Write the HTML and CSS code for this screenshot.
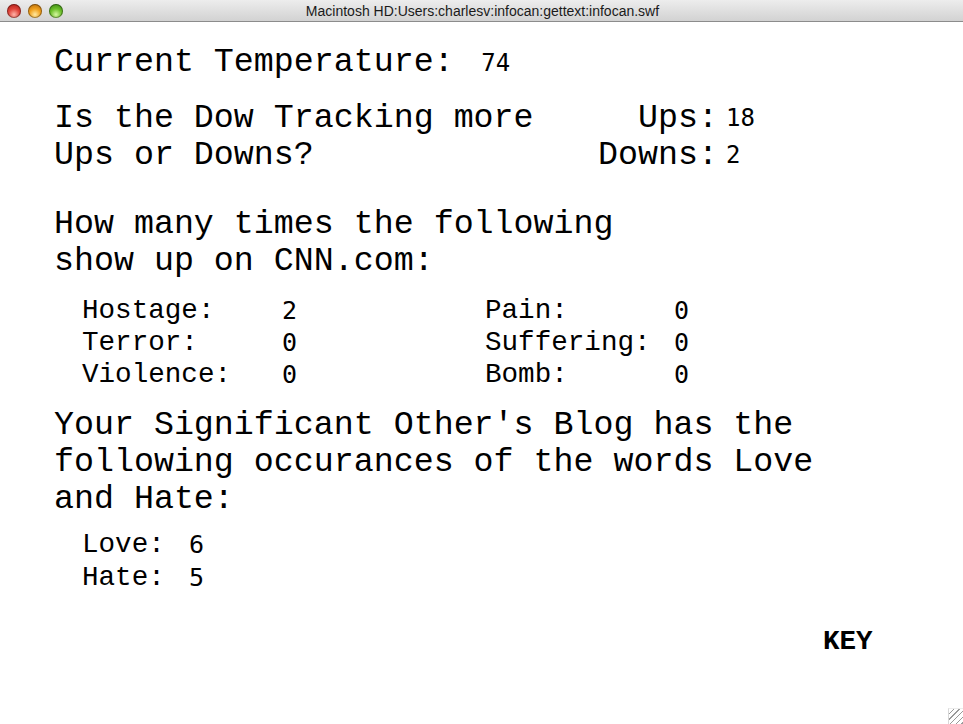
FILE: index.html
```html
<!DOCTYPE html>
<html lang="en">
<head>
    <meta charset="UTF-8">
    <title>infocan.swf</title>
    <link rel="stylesheet" href="styles.css">
</head>
<body>
    <div class="window">
        <div class="titlebar">
            <div class="lights">
                <span class="light light-red"></span>
                <span class="light light-yellow"></span>
                <span class="light light-green"></span>
            </div>
            <div class="title">Macintosh HD:Users:charlesv:infocan:gettext:infocan.swf</div>
        </div>

        <div class="content">
            <div class="temp">
                <span class="heading">Current Temperature:</span>
                <span class="value value-temp">74</span>
            </div>

            <div class="dow">
                <div class="heading dow-question">Is the Dow Tracking more<br>Ups or Downs?</div>
                <div class="dow-counts">
                    <span class="heading dow-label">Ups:</span><span class="value">18</span>
                    <span class="heading dow-label">Downs:</span><span class="value">2</span>
                </div>
            </div>

            <div class="heading cnn-title">How many times the following<br>show up on CNN.com:</div>
            <div class="cnn-counts">
                <span class="label">Hostage:</span><span class="value-sm">2</span>
                <span class="label">Pain:</span><span class="value-sm">0</span>
                <span class="label">Terror:</span><span class="value-sm">0</span>
                <span class="label">Suffering:</span><span class="value-sm">0</span>
                <span class="label">Violence:</span><span class="value-sm">0</span>
                <span class="label">Bomb:</span><span class="value-sm">0</span>
            </div>

            <div class="heading blog-title">Your Significant Other's Blog has the<br>following occurances of the words Love<br>and Hate:</div>
            <div class="blog-counts">
                <span class="label">Love:</span><span class="value-sm">6</span>
                <span class="label">Hate:</span><span class="value-sm">5</span>
            </div>

            <div class="key">KEY</div>
        </div>

        <div class="grip"></div>
    </div>
</body>
</html>
```

FILE: styles.css
```css
body {
    margin: 0;
    background: #fff;
}
.window {
    position: relative;
    width: 963px;
    height: 724px;
    overflow: hidden;
    background: #fff;
}
.titlebar {
    position: relative;
    height: 21px;
    border-bottom: 1px solid #8c8c8c;
    background: linear-gradient(#ededed, #d2d2d2);
    display: flex;
    align-items: center;
    justify-content: center;
}
.lights {
    position: absolute;
    left: 7px;
    top: 4px;
    display: flex;
    gap: 7px;
}
.light {
    width: 14px;
    height: 14px;
    border-radius: 50%;
    box-shadow: inset 0 0 0 1px rgba(0,0,0,0.35);
}
.light-red {
    background: radial-gradient(circle at 50% 75%, #ffb3a8 0, #e0443a 45%, #a3140f 100%);
}
.light-yellow {
    background: radial-gradient(circle at 50% 75%, #ffe9a0 0, #f0a01c 45%, #a85d05 100%);
}
.light-green {
    background: radial-gradient(circle at 50% 75%, #d6f7a0 0, #6cbf2a 45%, #2f7a0c 100%);
}
.title {
    font-family: "Liberation Sans", Arial, sans-serif;
    font-size: 14px;
    color: #1a1a1a;
    margin-left: 2px;
}
.content {
    padding: 22px 0 0 54px;
    font-family: "Courier New", "Nimbus Mono PS", "FreeMono", "Liberation Mono", monospace;
    color: #000;
}
.heading {
    font-size: 33.3px;
    line-height: 37px;
}
.value {
    font-family: "DejaVu Sans Mono", monospace;
    font-size: 24px;
    line-height: 37px;
}
.value-temp {
    margin-left: 18px;
}
.dow {
    display: flex;
    margin-top: 18px;
}
.dow-question {
    width: 520px;
}
.dow-counts {
    display: grid;
    grid-template-columns: 144px auto;
    column-gap: 8px;
}
.dow-label {
    text-align: right;
}
.cnn-title {
    margin-top: 32px;
}
.label {
    font-size: 27.6px;
    line-height: 32px;
}
.value-sm {
    font-family: "DejaVu Sans Mono", monospace;
    font-size: 25px;
    line-height: 32px;
}
.cnn-counts {
    display: grid;
    grid-template-columns: 200px 203px 189px auto;
    margin: 15px 0 0 28px;
}
.blog-title {
    margin-top: 16px;
}
.blog-counts {
    display: grid;
    grid-template-columns: 107px auto;
    margin: 10px 0 0 28px;
}
.blog-counts .label,
.blog-counts .value-sm {
    line-height: 33px;
}
.key {
    margin: 32px 0 0 769px;
    font-size: 27.6px;
    font-weight: bold;
    line-height: 32px;
}
.grip {
    position: absolute;
    right: 0;
    bottom: 0;
    width: 14px;
    height: 15px;
    border-left: 1px solid #d8d8d8;
    border-top: 1px solid #ececec;
    background: repeating-linear-gradient(135deg, transparent 0 3px, #9a9a9a 3px 4px);
}
```
